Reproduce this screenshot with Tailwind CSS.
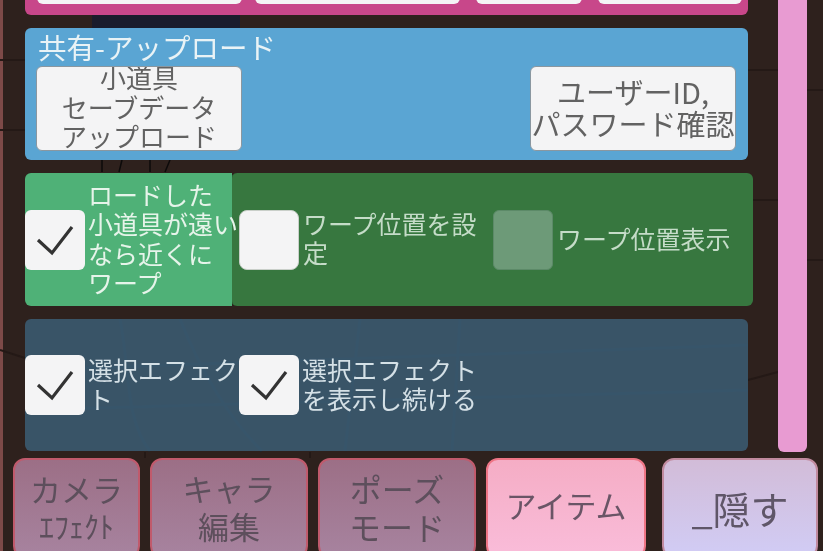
<!DOCTYPE html>
<html lang="ja">
<head>
  <meta charset="UTF-8" />
  <title>アイテム</title>
  <script src="https://cdn.jsdelivr.net/npm/@tailwindcss/browser@4"></script>
</head>
<body class="w-[823px] h-[551px] overflow-hidden relative bg-[#2e211d] font-['Noto_Sans_CJK_JP','Noto_Sans',sans-serif]">

<!-- scene behind the panels -->
<svg class="absolute inset-0 w-full h-full" viewBox="0 0 823 551" fill="none">
  <rect x="0" y="0" width="3" height="551" fill="#7d4a48"/>
  <rect x="92" y="15" width="148" height="14" fill="#1a1c2c"/>
  <path d="M102 160v12M122 160l-3 12M150 160v12M170 160l-5 12" stroke="#0c0a0a" stroke-width="1.5"/>
  <path d="M0 60H25M0 130H25M748 70H778M748 200H778M807 90H823M807 260H823M0 350L25 358M748 380L778 372M145 452V458M310 452V458" stroke="#241916" stroke-width="2"/>
  <path d="M120 319C130 370 125 420 150 451M180 319C200 370 230 420 262 451M360 319L345 451M460 319L452 451M25 370L748 345M25 410L748 390" stroke="#1d2a35" stroke-width="3"/>
</svg>

<div class="relative h-full blur-[0.5px]">
  <div class="flex h-[458px]">
    <!-- panels -->
    <div class="ml-[25px] w-[723px] flex flex-col">
      <div class="h-[15px] mb-[13px] flex items-end gap-[13px] pl-[12px] pr-[7px] pb-[11px] bg-[#c8478a] rounded-b-md">
        <div class="w-[205px] h-[12px] shrink-0 bg-[#f4f4f5] rounded-b-md"></div>
        <div class="w-[205px] h-[12px] shrink-0 bg-[#f4f4f5] rounded-b-md"></div>
        <div class="w-[106px] h-[12px] shrink-0 bg-[#f4f4f5] rounded-b-md ml-[3px]"></div>
        <div class="w-[144px] h-[12px] shrink-0 bg-[#f4f4f5] rounded-b-md ml-[3px]"></div>
      </div>

      <!-- upload -->
      <div class="h-[132px] mb-[13px] bg-[#5aa5d3] rounded-md">
        <div class="pl-[13px] h-[38px] text-[28.5px] leading-[38px] text-[#e9f3f6] whitespace-nowrap">共有-アップロード</div>
        <div class="flex justify-between pl-[11px] pr-[12px]">
          <div class="w-[206px] h-[85px] overflow-hidden bg-[#f4f4f5] border border-[#8a97a0] rounded-md text-center text-[26px] leading-[29.5px] text-[#626262]">
            <div class="-mt-[5px]">小道具<br>セーブデータ<br>アップロード</div>
          </div>
          <div class="w-[206px] h-[85px] flex items-center justify-center bg-[#f4f4f5] border border-[#8a97a0] rounded-md text-center text-[29px] leading-[32px] text-[#626262] whitespace-nowrap">
            <div class="-mt-[4px]">ユーザーID,<br>パスワード確認</div>
          </div>
        </div>
      </div>

      <!-- warp -->
      <div class="h-[133px] mb-[13px] flex w-[728px]">
        <div class="relative z-10 w-[207px] shrink-0 -mr-px flex items-center bg-[#4fb177] rounded-l-md">
          <div class="w-[60px] h-[60px] shrink-0 bg-[#f4f4f5] rounded-md">
            <svg viewBox="0 0 60 60" class="w-[60px] h-[60px]" fill="none"><path d="M13 30L27 43L47 17" stroke="#333" stroke-width="3.2"/></svg>
          </div>
          <div class="ml-[3px] -mt-[2px] text-[25px] leading-[29.5px] text-[#e6f4ea] whitespace-nowrap">ロードした<br>小道具が遠い<br>なら近くに<br>ワープ</div>
        </div>
        <div class="flex-1 flex items-center pl-[7px] bg-[#37773f] rounded-md border-l border-[#2d6636]">
          <div class="w-[60px] h-[60px] shrink-0 bg-[#f4f4f5] border border-[#c9cfc9] rounded-lg"></div>
          <div class="ml-[4px] -mt-[3px] w-[190px] text-[25px] leading-[29px] text-[#c5dcc8]">ワープ位置を設<br>定</div>
          <div class="w-[60px] h-[60px] shrink-0 bg-[#6d9a78] border border-[#5c8a68] rounded-md"></div>
          <div class="ml-[4px] -mt-[4px] text-[25px] leading-[30px] text-[#c5dcc8] whitespace-nowrap">ワープ位置表示</div>
        </div>
      </div>

      <!-- select effect -->
      <div class="h-[132px] flex items-center bg-[#3b5a70]/90 rounded-md">
        <div class="w-[60px] h-[60px] shrink-0 bg-[#f4f4f5] rounded-md">
          <svg viewBox="0 0 60 60" class="w-[60px] h-[60px]" fill="none"><path d="M13 30L27 43L47 17" stroke="#333" stroke-width="3.2"/></svg>
        </div>
        <div class="ml-[3px] -mt-[3px] w-[151px] text-[25px] leading-[29px] text-[#d4e0e6] whitespace-nowrap">選択エフェク<br>ト</div>
        <div class="w-[60px] h-[60px] shrink-0 bg-[#f4f4f5] rounded-md">
          <svg viewBox="0 0 60 60" class="w-[60px] h-[60px]" fill="none"><path d="M13 30L27 43L47 17" stroke="#333" stroke-width="3.2"/></svg>
        </div>
        <div class="ml-[3px] -mt-[3px] text-[25px] leading-[29px] text-[#d4e0e6] whitespace-nowrap">選択エフェクト<br>を表示し続ける</div>
      </div>
    </div>

    <!-- scrollbar -->
    <div class="ml-[30px] w-[29px] h-[452px] bg-[#e89bd2] rounded-b-md"></div>
  </div>

  <!-- tabs -->
  <div class="flex pl-[13px] text-center text-[#5d4f5c]">
    <div class="w-[127px] h-[100px] pt-[9px] border-2 border-[#c05a6c] rounded-xl bg-linear-to-b from-[#9c6f86] to-[#a7839f] text-[31px] leading-[40px]"><span>カメラ</span><div class="text-[30px] leading-[32px]">ｴﾌｪｸﾄ</div></div>
    <div class="ml-[10px] w-[158px] h-[100px] pt-[9px] border-2 border-[#c05a6c] rounded-xl bg-linear-to-b from-[#9c6f86] to-[#a7839f] text-[31px] leading-[38px]">キャラ<br>編集</div>
    <div class="ml-[10px] w-[158px] h-[100px] pt-[9px] border-2 border-[#c05a6c] rounded-xl bg-linear-to-b from-[#9c6f86] to-[#a7839f] text-[32px] leading-[38px]">ポーズ<br>モード</div>
    <div class="ml-[10px] w-[160px] h-[100px] pt-[25px] border-2 border-[#ee7585] rounded-xl bg-linear-to-b from-[#f5adc5] to-[#f9bcd9] text-[31px] leading-[40px] text-[#6a5566]">アイテム</div>
    <div class="ml-[16px] w-[156px] h-[100px] pt-[24px] border-2 border-[#c08a9e] rounded-xl bg-linear-to-b from-[#d2bcd8] to-[#d1ccf5] text-[38px] leading-[48px] text-[#5f5668]">_隠す</div>
  </div>
</div>
</body>
</html>
